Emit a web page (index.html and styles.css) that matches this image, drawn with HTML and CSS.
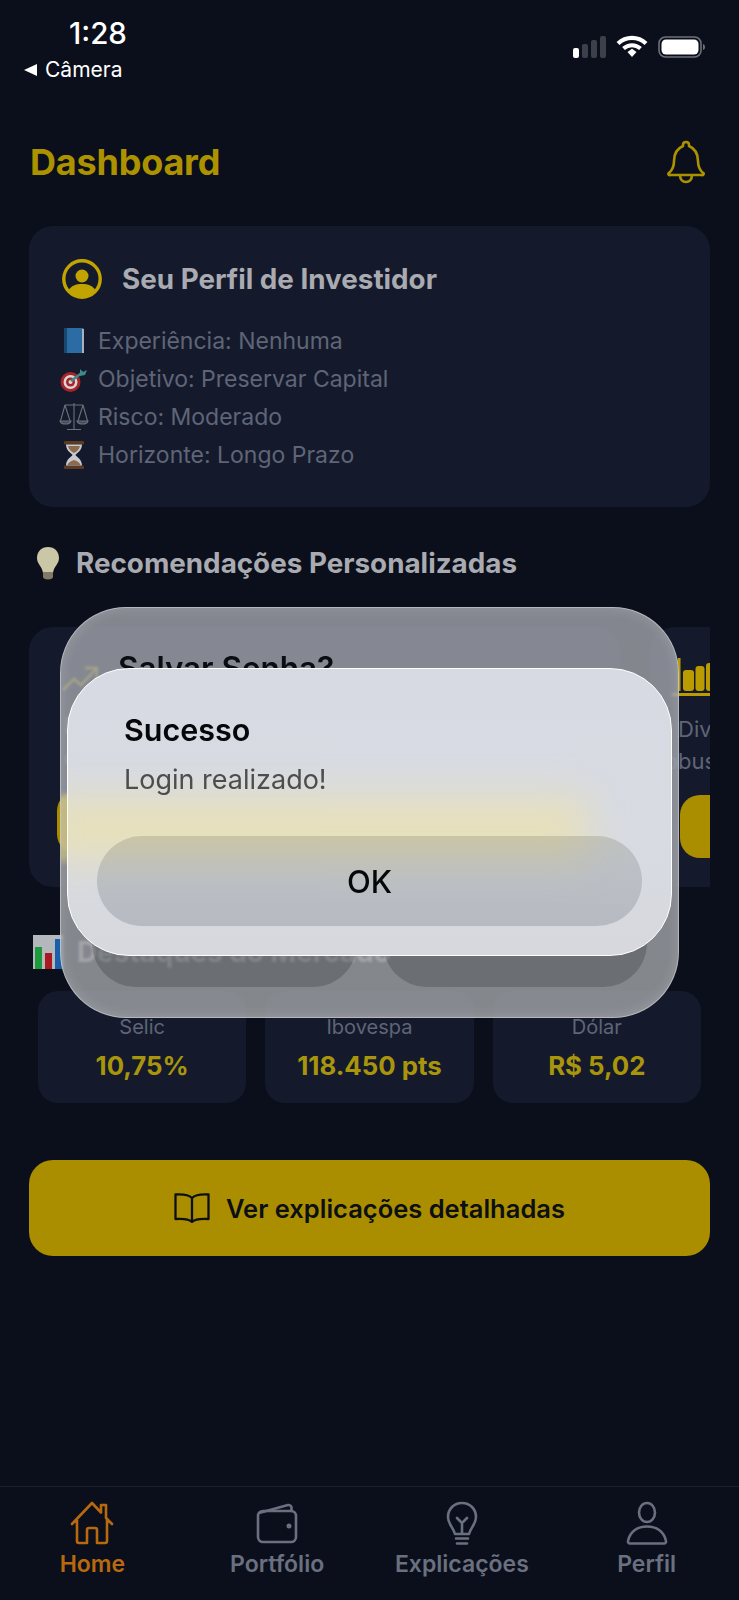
FILE: index.html
```html
<!DOCTYPE html>
<html lang="pt-BR">
<head>
<meta charset="utf-8">
<title>Dashboard</title>
<link rel="stylesheet" href="styles.css">
</head>
<body>
<div class="phone">
  <div class="status">
    <div class="status-left">
      <div class="time">1:28</div>
      <div class="back-app"><span class="back-tri"></span>Câmera</div>
    </div>
    <div class="status-right">
      <svg class="ic-signal" viewBox="0 0 33 22"><rect x="0" y="12" width="6" height="10" rx="2" fill="#fff"/><rect x="9" y="8" width="6" height="14" rx="2" fill="#3b404b"/><rect x="18" y="4" width="6" height="18" rx="2" fill="#3b404b"/><rect x="27" y="0" width="6" height="22" rx="2" fill="#3b404b"/></svg>
      <svg class="ic-wifi" viewBox="0 0 32 22"><path d="M2 8.500C10 1 22 1 30 8.500" fill="none" stroke="#fff" stroke-width="4.200"/><path d="M7.500 13.500C12.500 9 19.500 9 24.500 13.500" fill="none" stroke="#fff" stroke-width="4"/><path d="M11.500 17L16 13.800 20.500 17 16 22Z" fill="#fff"/></svg>
      <svg class="ic-batt" viewBox="0 0 47 22"><rect x="1" y="1" width="42" height="20" rx="6.500" fill="none" stroke="#6d7079" stroke-width="1.600"/><rect x="3.500" y="3.500" width="37" height="15" rx="4.500" fill="#fff"/><path d="M45 8c1.500.5 2 1.500 2 3s-.5 2.500-2 3z" fill="#6d7079"/></svg>
    </div>
  </div>

  <header class="header">
    <h1 class="page-title">Dashboard</h1>
    <svg class="ic-bell" viewBox="0 0 40 44"><path d="M20 2c-2 0-3 1-3 3v1C10 9 8 15 8 21c0 6-1.500 9-5 12a1 1 0 0 0 1 2H36a1 1 0 0 0 1-2c-3.500-3-5-6-5-12C32 15 30 9 23 6V5c0-2-1-3-3-3ZM14 35c0 5 3 7 6 7s6-2 6-7" fill="none" stroke="#ad9200" stroke-width="2.600" stroke-linejoin="round"/></svg>
  </header>

  <main class="content">
    <section class="profile">
      <div class="profile-head">
        <svg class="ic-user" viewBox="0 0 40 40"><circle cx="20" cy="20" r="18.200" fill="none" stroke="#c2a400" stroke-width="3.400"/><circle cx="20" cy="17" r="6.500" fill="#c2a400"/><path d="M6.500 31.500C9 26.500 14 25 20 25s11 1.500 13.500 6.500C30 36 25 38 20 38S10 36 6.500 31.500Z" fill="#c2a400"/></svg>
        <h2 class="section-title">Seu Perfil de Investidor</h2>
      </div>
      <ul class="facts">
        <li class="fact">
          <svg class="emoji" viewBox="0 0 30 30"><rect x="6" y="2" width="19" height="25" rx="1.500" fill="#2a6ca3"/><rect x="5" y="2" width="3" height="25" fill="#17496f"/><rect x="23" y="3" width="2" height="24" fill="#a9b2bb"/></svg>
          <span>Experiência: Nenhuma</span>
        </li>
        <li class="fact">
          <svg class="emoji" viewBox="0 0 30 30"><circle cx="11.500" cy="18" r="10" fill="#a8242a"/><circle cx="11.500" cy="18" r="7" fill="#d9d5d2"/><circle cx="11.500" cy="18" r="4.500" fill="#a8242a"/><circle cx="11.500" cy="18" r="2" fill="#d9d5d2"/><path d="M12 17L24 8" stroke="#3b8a8c" stroke-width="2.500"/><path d="M21 5l3 3 4-2-2 5-5 1z" fill="#3b8a8c"/></svg>
          <span>Objetivo: Preservar Capital</span>
        </li>
        <li class="fact">
          <svg class="emoji" viewBox="0 0 30 30" fill="none" stroke="#6b7079" stroke-width="1.100"><path d="M15 1V27M8 27.500H22M6 3H24"/><path d="M6 3L1.500 19M6 3l5 16M24 3l-5 16M24 3l4.500 16"/><path d="M1 19c1 4 10 4 11 0ZM18 19c1 4 10 4 11 0Z" fill="#474c59"/></svg>
          <span>Risco: Moderado</span>
        </li>
        <li class="fact">
          <svg class="emoji" viewBox="0 0 30 30"><rect x="5" y="1" width="20" height="3.500" rx="1" fill="#5c3a22"/><rect x="5" y="25.500" width="20" height="3.500" rx="1" fill="#5c3a22"/><path d="M7 4.500H23C23 11 17.500 13 16.500 15 17.500 17 23 19 23 25.500H7C7 19 12.500 17 13.500 15 12.500 13 7 11 7 4.500Z" fill="#c6c9cf"/><path d="M9 6h12c-1 4-4 6-6 7-2-1-5-3-6-7ZM8.500 25c1-3 4-4 6.500-5 2.500 1 5.500 2 6.500 5Z" fill="#8e6a48"/></svg>
          <span>Horizonte: Longo Prazo</span>
        </li>
      </ul>
    </section>

    <div class="title-row rec-title">
      <svg class="ic-bulb-emoji" viewBox="0 0 24 34"><path d="M12 1C5.500 1 1 5.500 1 12c0 6 5 8 6 15h10c1-7 6-9 6-15 0-6.500-4.500-11-11-11Z" fill="#cbc7a6"/><path d="M7 26h10v5c0 1.500-2 2.500-5 2.500S7 32.500 7 31Z" fill="#7f7a68"/></svg>
      <h2 class="section-title">Recomendações Personalizadas</h2>
    </div>

    <div class="rec-row">
      <article class="rec-card">
        <svg class="ic-trend" viewBox="0 0 36 26" fill="none" stroke="#c2a400" stroke-width="2.500"><path d="M1 24L12 13l7 6L34 3M23 2h12v12"/></svg>
        <h3 class="rec-name">Tesouro Selic</h3>
        <p class="rec-desc rec-desc-first">Ideal para preservar o capital</p>
        <p class="rec-desc rec-desc-first">com baixo risco e liquidez</p>
        <div class="rec-btn">Ver mais</div>
      </article>
      <article class="rec-card rec-card-next">
        <svg class="ic-bars" viewBox="0 0 60 38"><g fill="#ba9b00"><rect x="6" y="0" width="2.500" height="33"/><rect x="11" y="12" width="11" height="21" rx="3"/><rect x="23.500" y="8" width="9" height="25" rx="3"/><rect x="34" y="5" width="10" height="28" rx="3"/><rect x="0" y="35" width="60" height="3"/></g></svg>
        <h3 class="rec-name">Fundos</h3>
        <p class="rec-desc">Diversifique sua carteira</p>
        <p class="rec-desc rec-outdent">robusta</p>
        <div class="rec-btn">Ver mais</div>
      </article>
    </div>

    <div class="title-row market-title">
      <svg class="ic-chart-emoji" viewBox="0 0 30 34"><rect width="30" height="34" fill="#b4b7bb"/><rect x="2" y="12" width="7" height="22" fill="#1d9a3c"/><rect x="12" y="18" width="7" height="16" fill="#a81a20"/><rect x="22" y="4" width="7" height="30" fill="#1a5fa8"/></svg>
      <h2 class="section-title">Destaques do Mercado</h2>
    </div>

    <div class="stats">
      <div class="stat"><div class="stat-label">Selic</div><div class="stat-value">10,75%</div></div>
      <div class="stat"><div class="stat-label">Ibovespa</div><div class="stat-value">118.450 pts</div></div>
      <div class="stat"><div class="stat-label">Dólar</div><div class="stat-value">R$ 5,02</div></div>
    </div>

    <button class="cta">
      <svg class="ic-book" viewBox="0 0 36 30" fill="none" stroke="#0b0f16" stroke-width="2.300" stroke-linejoin="round"><path d="M18 5C15 2 9 1 1.500 1.500V26C9 25.500 15 26 18 29 21 26 27 25.500 34.500 26V1.500C27 1 21 2 18 5ZM18 5V29"/></svg>
      Ver explicações detalhadas
    </button>
  </main>

  <nav class="tabs">
    <div class="tab tab-on">
      <svg class="tab-icon" viewBox="0 0 44 44"><path d="M2 23L22 2l9 9.500V4h5v13l6 6M7 19v21a2 2 0 0 0 2 2h8V29a2 2 0 0 1 2-2h6a2 2 0 0 1 2 2v13h8a2 2 0 0 0 2-2V19"/></svg>
      <span>Home</span>
    </div>
    <div class="tab">
      <svg class="tab-icon" viewBox="0 0 44 44"><rect x="3" y="10" width="38" height="31" rx="5"/><path d="M4 12L33 4a3 3 0 0 1 3.500 2.500V10"/><circle class="tab-dot" cx="34" cy="25" r="2.500"/></svg>
      <span>Portfólio</span>
    </div>
    <div class="tab">
      <svg class="tab-icon" viewBox="0 0 44 44"><path d="M22 2C14 2 8 8 8 16c0 7 5 10 7 17h14c2-7 7-10 7-17 0-8-6-14-14-14ZM17 17l5 5 5-5M22 22V33M16 37.500H28M17 42.500H27"/></svg>
      <span>Explicações</span>
    </div>
    <div class="tab">
      <svg class="tab-icon" viewBox="0 0 44 44"><ellipse cx="22" cy="11.500" rx="8" ry="9.500"/><path d="M5 42.500a2 2 0 0 1-2-2.500C5 30 13 25.500 22 25.500S39 30 41 40a2 2 0 0 1-2 2.500Z"/></svg>
      <span>Perfil</span>
    </div>
  </nav>

  <div class="dialog-back">
    <div class="dialog-back-title">Salvar Senha?</div>
    <div class="dialog-back-btns">
      <div class="back-btn">Agora não salvar</div>
      <div class="back-btn">Salvar</div>
    </div>
  </div>

  <div class="dialog-front">
    <div class="dialog-glow"></div>
    <div class="dialog-title">Sucesso</div>
    <div class="dialog-msg">Login realizado!</div>
    <div class="dialog-ok">OK</div>
  </div>
</div>
</body>
</html>
```

FILE: styles.css
```css
* { box-sizing: border-box; margin: 0; padding: 0; }
html, body { background: #0a0f1b; }
body { width: 739px; height: 1600px; overflow: hidden; font-family: Inter, "Liberation Sans", sans-serif; }

.phone { position: relative; width: 739px; height: 1600px; display: flex; flex-direction: column; background: #0a0f1b; overflow: hidden; }

/* status bar */
.status { height: 120px; flex: none; display: flex; justify-content: space-between; }
.status-left { padding: 18px 0 0 24px; color: #fff; }
.time { font-size: 29.500px; line-height: 30px; font-weight: 500; padding-left: 45px; }
.back-app { margin-top: 7px; font-size: 21px; line-height: 30px; font-weight: 400; display: flex; align-items: center; gap: 8px; }
.back-tri { width: 0; height: 0; border-top: 6.500px solid transparent; border-bottom: 6.500px solid transparent; border-right: 13px solid #fff; }
.status-right { display: flex; align-items: flex-start; gap: 10px; padding: 35px 34px 0 0; }
.ic-signal { width: 33px; height: 22px; margin-top: 1px; }
.ic-wifi { width: 32px; height: 22px; }
.ic-batt { width: 47px; height: 22px; margin-top: 1px; }

/* header */
.header { height: 84px; flex: none; display: flex; align-items: center; justify-content: space-between; padding: 0 33px 0 30px; }
.page-title { font-size: 36px; font-weight: 700; color: #ad9200; letter-spacing: -.2px; }
.ic-bell { width: 40px; height: 44px; }

/* content */
.content { padding: 22px 29px 0; display: flex; flex-direction: column; }
.section-title { font-size: 27.800px; line-height: 40px; font-weight: 700; color: #a9abb1; }

.profile { height: 281px; background: #141a2c; border-radius: 24px; padding: 33px 30px 0; }
.profile-head { display: flex; align-items: center; gap: 20px; margin-left: 3px; }
.ic-user { width: 40px; height: 40px; flex: none; }
.facts { list-style: none; margin-top: 23px; }
.fact { display: flex; align-items: center; gap: 9px; height: 38px; font-size: 23px; color: #5f6577; }
.emoji { width: 30px; height: 30px; flex: none; }

.title-row { height: 40px; display: flex; align-items: center; }
.rec-title { margin-top: 36px; gap: 16px; padding-left: 7px; }
.ic-bulb-emoji { width: 24px; height: 34px; flex: none; }

.rec-row { margin-top: 44px; height: 260px; display: flex; gap: 32px; overflow: hidden; }
.rec-card { flex: none; width: 590px; height: 260px; background: #141a2c; border-radius: 24px; padding: 30px 28px 0; }
.rec-card-next { padding-left: 21px; }
.ic-trend { display: block; width: 36px; height: 26px; margin: 9px 0 4px 5px; }
.ic-bars { display: block; width: 60px; height: 38px; margin-top: 1px; }
.rec-name { display: none; }
.rec-desc { font-size: 22px; line-height: 32px; color: #5f6577; white-space: nowrap; }
.rec-desc-first { padding-left: 7px; }
.rec-card .rec-desc:first-of-type { margin-top: 17px; }
.rec-card-next .rec-desc { padding-left: 6px; }
.rec-card-next .rec-outdent { margin-left: -21px; }
.rec-btn { margin-top: 18px; height: 63px; background: #ab8e00; border-radius: 20px; display: flex; align-items: center; justify-content: center; font-size: 22px; font-weight: 600; color: #0b0f16; }
.rec-card-next .rec-btn { margin-left: 8px; }

.market-title { margin-top: 45px; gap: 14px; padding-left: 4px; }
.ic-chart-emoji { width: 30px; height: 34px; flex: none; }

.stats { margin-top: 19px; padding: 0 9px; display: grid; grid-template-columns: repeat(3, 1fr); gap: 19px; }
.stat { height: 112px; background: #141a2c; border-radius: 20px; display: flex; flex-direction: column; align-items: center; padding-top: 22px; }
.stat-label { font-size: 20px; line-height: 28px; color: #5f6577; }
.stat-value { margin-top: 10px; font-size: 25.800px; line-height: 30px; font-weight: 700; color: #a8950c; }

.cta { margin-top: 57px; height: 96px; border: 0; border-radius: 24px; background: #ab8e00; display: flex; align-items: center; justify-content: center; gap: 16px; font-family: inherit; font-size: 25.500px; font-weight: 600; color: #0b0f16; }
.ic-book { width: 36px; height: 30px; }

/* tab bar */
.tabs { margin-top: auto; height: 114px; flex: none; border-top: 1px solid #1a2030; display: grid; grid-template-columns: repeat(4, 1fr); padding-top: 14px; }
.tab { display: flex; flex-direction: column; align-items: center; color: #6b7080; font-size: 23px; line-height: 30px; font-weight: 600; }
.tab span { margin-top: 4px; }
.tab-on { color: #b8690f; }
.tab-icon { width: 44px; height: 44px; fill: none; stroke: currentColor; stroke-width: 2.600; stroke-linejoin: round; stroke-linecap: round; }
.tab-dot { fill: currentColor; stroke: none; }

/* dialogs */
.dialog-back { position: absolute; left: 60px; top: 607px; width: 619px; height: 411px; border-radius: 66px; border: 1px solid rgba(255,255,255,.4); background: linear-gradient(180deg, transparent 182px, rgba(215,200,110,.55) 192px, rgba(215,200,110,.55) 248px, transparent 258px) 0 0 / 9px 100% no-repeat, linear-gradient(180deg, rgba(158,161,168,.82), rgba(160,162,166,.82)); box-shadow: inset 0 0 14px rgba(255,255,255,.16); backdrop-filter: blur(1px); padding: 41px 31px 30px; display: flex; flex-direction: column; }
.dialog-back-title { font-size: 31.400px; line-height: 38px; font-weight: 600; color: #0b0d12; padding-left: 26px; }
.dialog-back-btns { margin-top: auto; display: flex; gap: 26px; }
.back-btn { flex: 1; height: 88px; border-radius: 44px; background: rgba(30,32,36,.24); display: flex; align-items: center; justify-content: center; font-size: 19px; font-weight: 500; color: #05060a; }
.back-btn + .back-btn { color: #f2f2f2; }

.dialog-front { position: absolute; left: 67px; top: 668px; width: 605px; height: 288px; border-radius: 62px; border: 1.500px solid #fff; background: linear-gradient(180deg, #d7dae2, #d8dbe2 60%, #d6d8dd); padding: 43px 29px 0; overflow: hidden; }
.dialog-glow { position: absolute; left: -30px; top: 130px; width: 550px; height: 60px; background: #f2e4a0; opacity: .62; filter: blur(20px); }
.dialog-title { position: relative; padding-left: 27px; font-size: 30.500px; line-height: 36px; font-weight: 600; color: #06070a; }
.dialog-msg { position: relative; margin-top: 14px; padding-left: 27px; font-size: 27px; line-height: 36px; color: #4c4d4e; }
.dialog-ok { position: relative; margin-top: 38px; height: 90px; border-radius: 45px; background: linear-gradient(180deg, rgba(120,120,100,.26), rgba(110,118,125,.27) 45%, rgba(110,115,125,.3)); display: flex; align-items: center; justify-content: center; font-size: 31px; font-weight: 500; color: #06070a; }
```
